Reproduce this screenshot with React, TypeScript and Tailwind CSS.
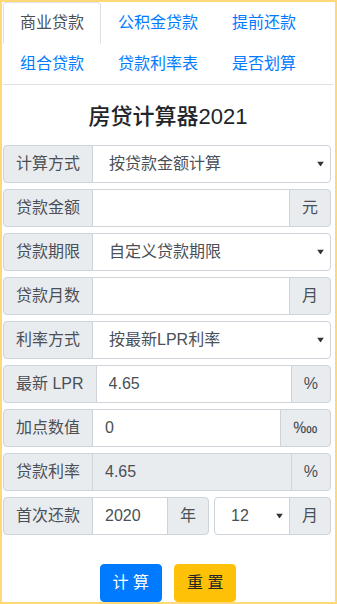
import React from "react";

const tabs = ["商业贷款", "公积金贷款", "提前还款", "组合贷款", "贷款利率表", "是否划算"];

function Addon({ children, first }: { children: React.ReactNode; first?: boolean }) {
  return (
    <span
      className={
        "flex shrink-0 items-center whitespace-nowrap border border-[#ced4da] bg-[#e9ecef] px-3 text-base leading-6 text-[#495057] " +
        (first ? "rounded-l" : "-ml-px rounded-r")
      }
    >
      {children}
    </span>
  );
}

function Arrow() {
  return (
    <svg
      className="pointer-events-none absolute right-[7px] top-1/2 -translate-y-1/2"
      width="7"
      height="5"
      viewBox="0 0 7 5"
    >
      <path d="M0 0h7L3.5 5z" fill="#333" />
    </svg>
  );
}

function SelectBox({ options, rounded }: { options: string[]; rounded: string }) {
  return (
    <div className="relative -ml-px flex-1">
      <select
        className={
          "h-full w-full appearance-none border border-[#ced4da] bg-white pl-4 pr-6 text-base text-[#495057] outline-none " +
          rounded
        }
      >
        {options.map((o) => (
          <option key={o}>{o}</option>
        ))}
      </select>
      <Arrow />
    </div>
  );
}

function TextInput({ value, readOnly, rounded = "" }: { value?: string; readOnly?: boolean; rounded?: string }) {
  return (
    <input
      type="text"
      defaultValue={value}
      readOnly={readOnly}
      className={
        "-ml-px w-0 min-w-0 flex-1 border border-[#ced4da] px-3 text-base text-[#495057] outline-none " +
        (readOnly ? "bg-[#e9ecef] " : "bg-white ") +
        rounded
      }
    />
  );
}

export default function App() {
  return (
    <div className="min-h-screen border-2 border-[#ffd978] bg-white pl-px pr-[2px] font-['Liberation_Sans','Noto_Sans_CJK_SC',sans-serif]">
      {/* tabs */}
      <ul className="flex flex-wrap border-b border-[#dee2e6]">
        {tabs.map((t, i) => (
          <li key={t} className="-mb-px">
            <a
              href="#"
              className={
                "block rounded-t border px-4 py-2 text-base leading-6 " +
                (i === 0
                  ? "border-[#dee2e6] border-b-white bg-white text-[#495057]"
                  : "border-transparent text-[#007bff]")
              }
            >
              {t}
            </a>
          </li>
        ))}
      </ul>

      <h5 className="mb-[15px] mt-[19px] text-center text-[22px] font-medium leading-[1.2] text-[#212529]">
        房贷计算器2021
      </h5>

      {/* form */}
      <div className="mr-[2px] flex flex-col gap-[6px]">
        <div className="flex h-[38px]">
          <Addon first>计算方式</Addon>
          <SelectBox options={["按贷款金额计算", "按房屋总价计算"]} rounded="rounded-r" />
        </div>
        <div className="flex h-[38px]">
          <Addon first>贷款金额</Addon>
          <TextInput />
          <Addon>元</Addon>
        </div>
        <div className="flex h-[38px]">
          <Addon first>贷款期限</Addon>
          <SelectBox options={["自定义贷款期限", "30年", "20年"]} rounded="rounded-r" />
        </div>
        <div className="flex h-[38px]">
          <Addon first>贷款月数</Addon>
          <TextInput />
          <Addon>月</Addon>
        </div>
        <div className="flex h-[38px]">
          <Addon first>利率方式</Addon>
          <SelectBox options={["按最新LPR利率", "按旧版基准利率"]} rounded="rounded-r" />
        </div>
        <div className="flex h-[38px]">
          <Addon first>最新 LPR</Addon>
          <TextInput value="4.65" />
          <Addon>%</Addon>
        </div>
        <div className="flex h-[38px]">
          <Addon first>加点数值</Addon>
          <TextInput value="0" />
          <Addon>‱</Addon>
        </div>
        <div className="flex h-[38px]">
          <Addon first>贷款利率</Addon>
          <TextInput value="4.65" readOnly />
          <Addon>%</Addon>
        </div>
        <div className="flex h-[38px] gap-[5px]">
          <div className="flex w-[206px]">
            <Addon first>首次还款</Addon>
            <TextInput value="2020" />
            <Addon>年</Addon>
          </div>
          <div className="flex flex-1">
            <div className="relative flex-1">
              <select className="h-full w-full appearance-none rounded-l border border-[#ced4da] bg-white pl-4 pr-6 text-base text-[#495057] outline-none">
                {Array.from({ length: 12 }, (_, i) => (
                  <option key={i} selected={i === 11}>
                    {i + 1}
                  </option>
                ))}
              </select>
              <Arrow />
            </div>
            <Addon>月</Addon>
          </div>
        </div>
      </div>

      {/* buttons */}
      <div className="mt-[29px] flex justify-center gap-3">
        <button className="rounded border border-[#007bff] bg-[#007bff] px-3 py-1.5 text-base leading-6 text-white">
          计 算
        </button>
        <button className="rounded border border-[#ffc107] bg-[#ffc107] px-3 py-1.5 text-base leading-6 text-[#212529]">
          重 置
        </button>
      </div>
    </div>
  );
}
